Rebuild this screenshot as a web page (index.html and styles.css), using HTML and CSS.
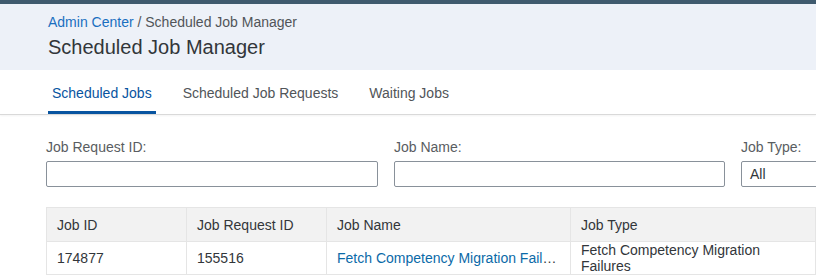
FILE: index.html
```html
<!DOCTYPE html>
<html>
<head>
  <title>Scheduled Job Manager</title>
  <link rel="stylesheet" href="styles.css">
</head>
<body>

  <div class="topbar"></div>

  <div class="page-header">
    <div class="breadcrumb"><a href="#">Admin Center</a> / Scheduled Job Manager</div>
    <h1>Scheduled Job Manager</h1>
  </div>

  <div class="tabs">
    <div class="tab active">Scheduled Jobs</div>
    <div class="tab">Scheduled Job Requests</div>
    <div class="tab">Waiting Jobs</div>
  </div>

  <div class="content">
    <div class="filters">
      <div class="field">
        <label>Job Request ID:</label>
        <input type="text">
      </div>
      <div class="field">
        <label>Job Name:</label>
        <input type="text">
      </div>
      <div class="field">
        <label>Job Type:</label>
        <div class="select">All</div>
      </div>
    </div>

    <table class="jobs">
      <thead>
        <tr>
          <th class="col-id">Job ID</th>
          <th class="col-req">Job Request ID</th>
          <th class="col-name">Job Name</th>
          <th class="col-type">Job Type</th>
          <th class="col-more"></th>
        </tr>
      </thead>
      <tbody>
        <tr>
          <td>174877</td>
          <td>155516</td>
          <td class="name"><a href="#">Fetch Competency Migration Failures</a></td>
          <td>Fetch Competency Migration Failures</td>
          <td></td>
        </tr>
      </tbody>
    </table>
  </div>

</body>
</html>
```

FILE: styles.css
```css
body {
  margin: 0;
  font-family: "Liberation Sans", Arial, sans-serif;
  font-size: 14px;
  color: #32363a;
  background-color: #fff;
  overflow: hidden;
}

.topbar {
  height: 4px;
  background-color: #3f5a6e;
}

.page-header {
  background-color: #edf1f8;
  padding: 9px 48px 10px 48px;
  height: 47px;
}

.breadcrumb {
  line-height: 18px;
  color: #515559;
}

.breadcrumb a {
  color: #1a6fc0;
  text-decoration: none;
}

h1 {
  margin: 3px 0 0 0;
  font-size: 20px;
  font-weight: normal;
  line-height: 26px;
  color: #32363a;
}

.tabs {
  display: flex;
  gap: 23px;
  padding: 0 0 0 48px;
  height: 44px;
  border-bottom: 1px solid #d9d9d9;
  box-shadow: 0 1px 2px rgba(0, 0, 0, 0.05);
}

.tab {
  display: flex;
  align-items: center;
  padding: 4px 4px 0 4px;
  border-bottom: 3px solid transparent;
  color: #515559;
}

.tab.active {
  color: #0854a0;
  border-bottom-color: #0854a0;
}

.content {
  padding: 23px 0 0 46px;
}

.filters {
  display: grid;
  grid-template-columns: 332px 331px 332px;
  gap: 16px;
  width: 1100px;
}

.field label {
  display: block;
  line-height: 18px;
  color: #595d61;
}

.field input, .select {
  box-sizing: border-box;
  display: block;
  width: 100%;
  height: 26px;
  margin-top: 5px;
  border: 1px solid #89919a;
  border-radius: 2px;
  font-family: inherit;
  font-size: 14px;
  padding: 0 8px;
  background-color: #fff;
}

.select {
  line-height: 24px;
  color: #32363a;
}

.jobs {
  margin-top: 20px;
  border-collapse: collapse;
  table-layout: fixed;
  width: 1010px;
}

.jobs th, .jobs td {
  box-sizing: border-box;
  border: 1px solid #e5e5e5;
  padding: 0 10px;
  text-align: left;
  font-weight: normal;
  line-height: 16px;
  vertical-align: middle;
}

.jobs th {
  height: 34px;
  background-color: #f2f2f2;
}

.jobs td {
  height: 33px;
}

.col-id, .col-req { width: 140px; }
.col-name { width: 244px; }
.col-type { width: 245px; }
.col-more { width: 241px; }

.jobs td.name {
  white-space: nowrap;
  overflow: hidden;
  text-overflow: ellipsis;
}

.jobs td.name a {
  color: #0b6aa8;
  text-decoration: none;
}
```
